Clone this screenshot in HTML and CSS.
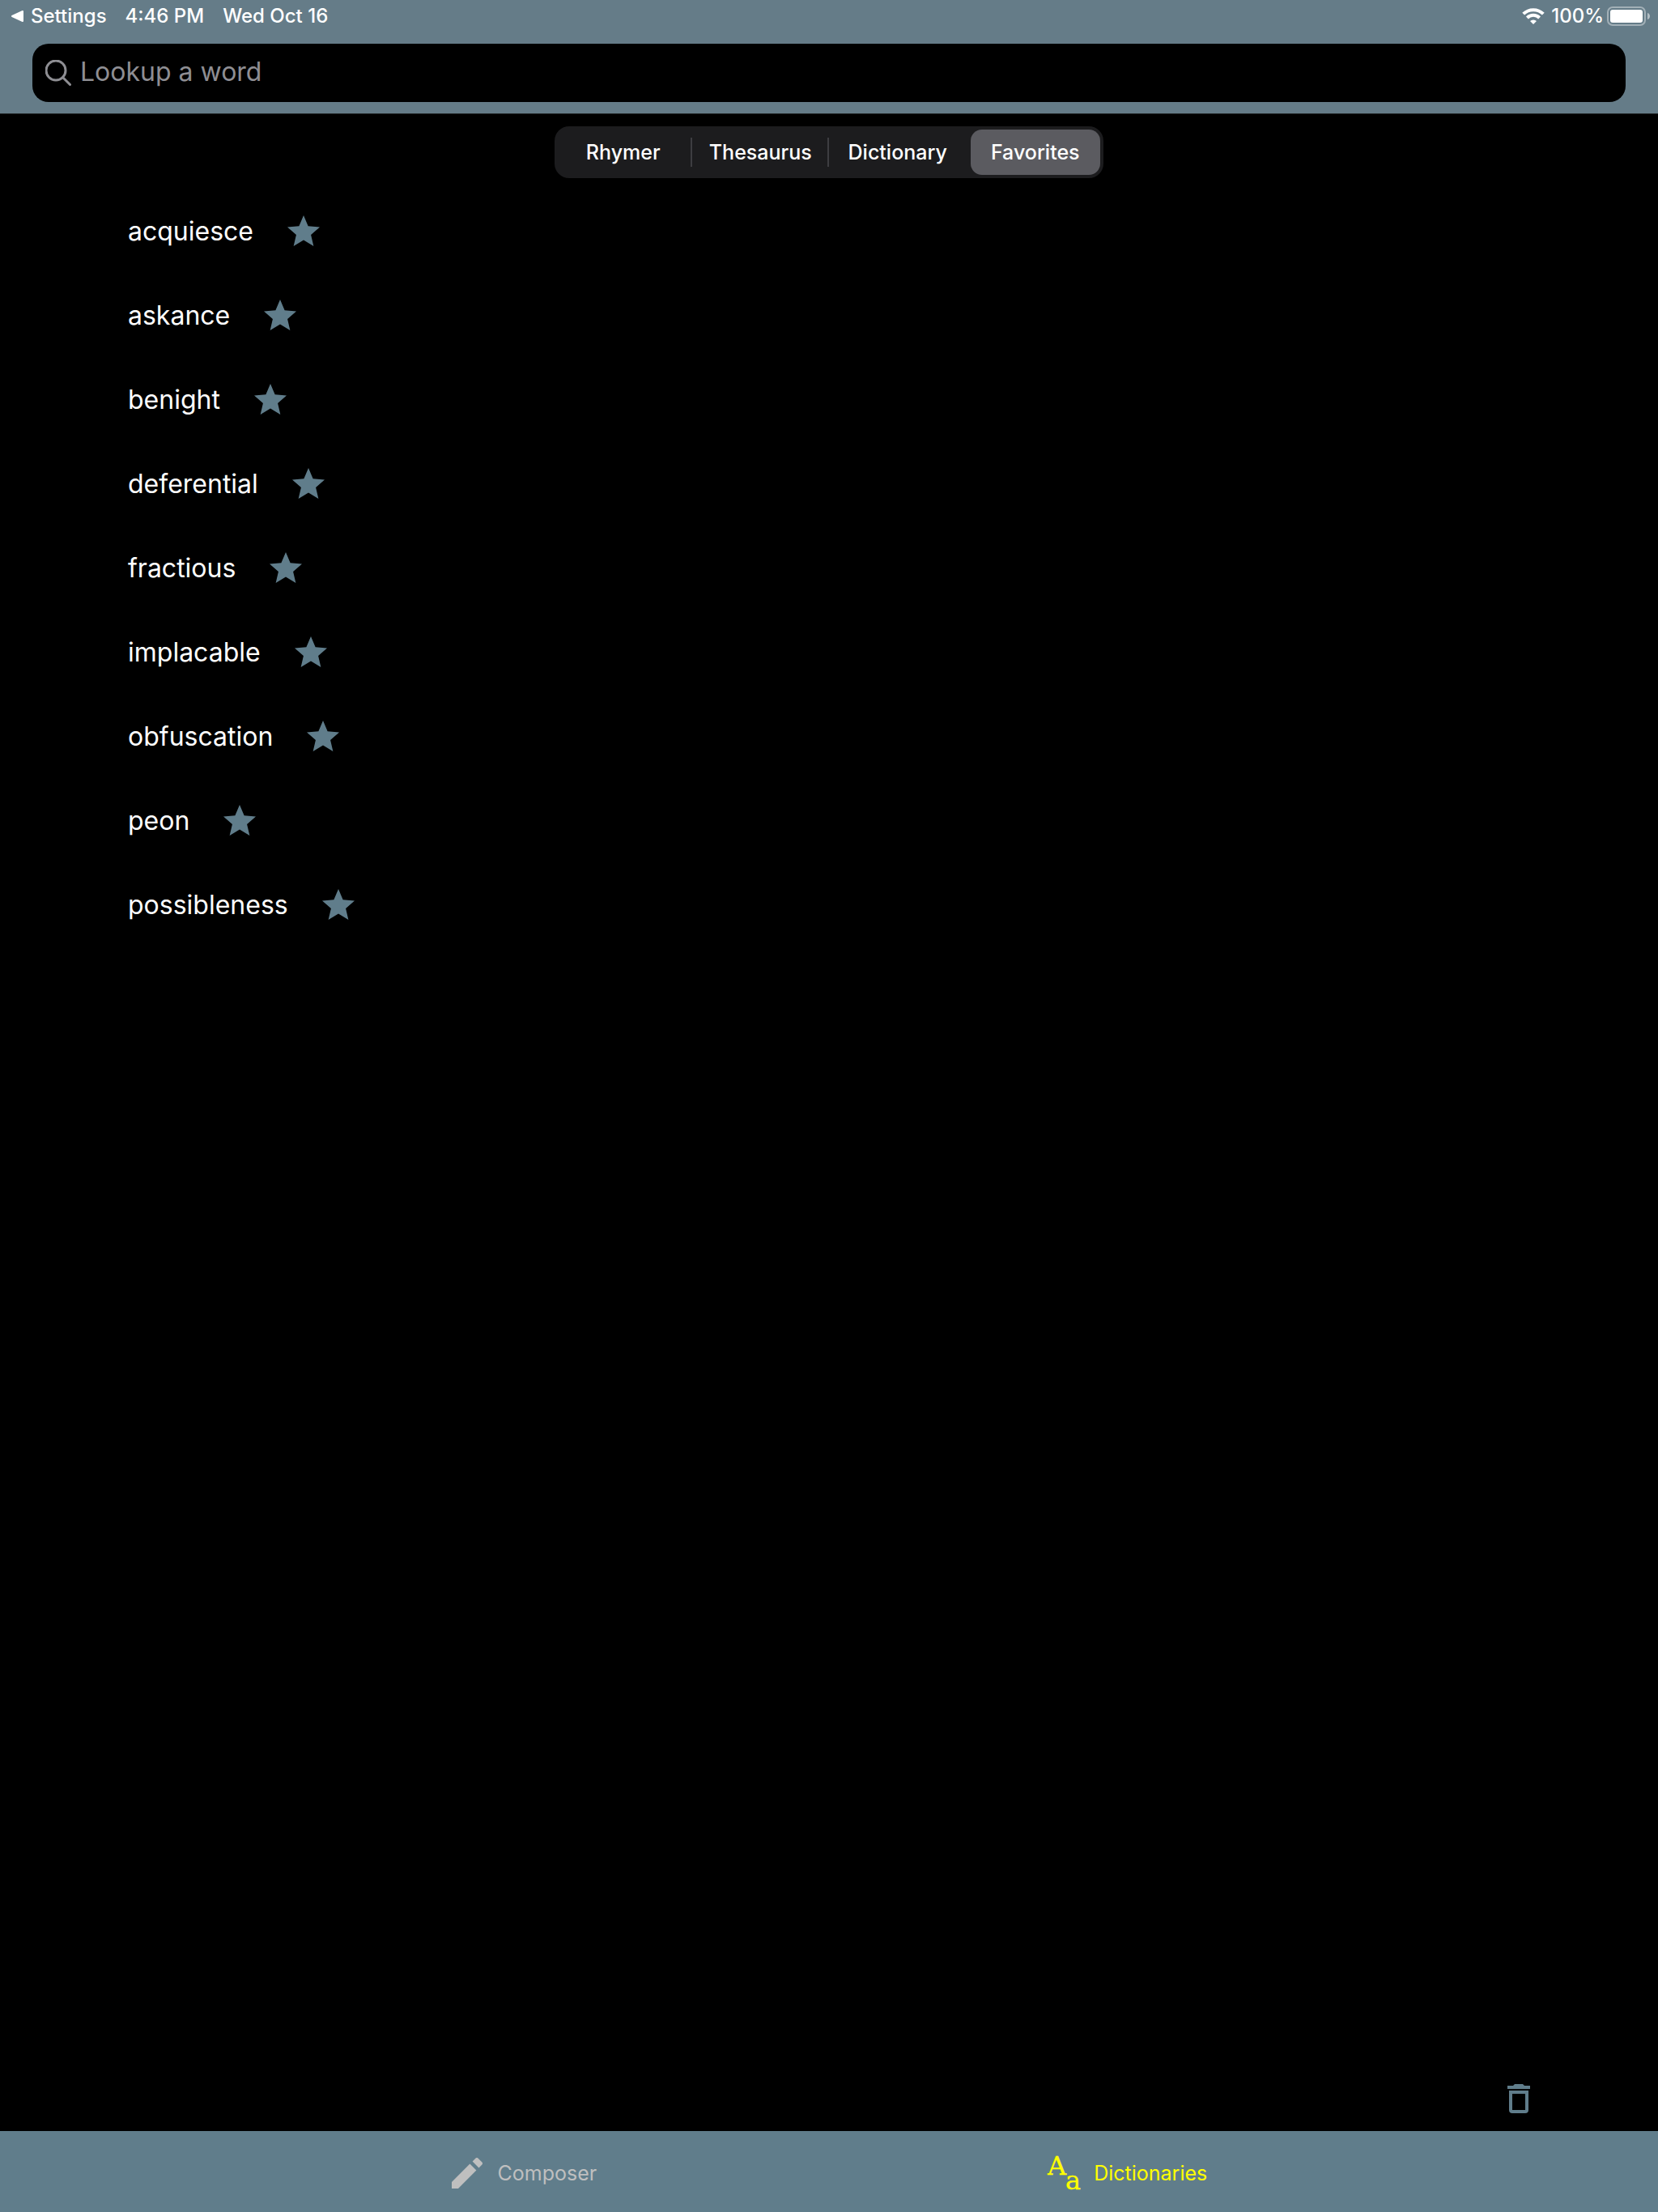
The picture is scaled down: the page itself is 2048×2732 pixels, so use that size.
FILE: index.html
```html
<!DOCTYPE html>
<html lang="en">
<head>
<meta charset="utf-8">
<meta name="viewport" content="width=device-width, initial-scale=1">
<title>Favorites</title>
<link rel="stylesheet" href="styles.css">
</head>
<body>
<svg class="sprite" aria-hidden="true">
  <symbol id="star" viewBox="0 0 24 24"><path d="M12 17.27 18.18 21l-1.64-7.03L22 9.24l-7.19-.61L12 2 9.19 8.63 2 9.24l5.46 4.73L5.82 21z"/></symbol>
</svg>
<header class="header">
  <div class="status">
    <a class="back" href="#"><svg class="back-icon" viewBox="0 0 18 18" aria-hidden="true"><path d="M3 9 16 3v12z"/></svg>Settings</a>
    <span>4:46 PM</span>
    <span>Wed Oct 16</span>
    <div class="power">
      <svg class="wifi" viewBox="0 0 28 20" aria-hidden="true">
        <path class="wifi-arc" d="M1.7 7.2a17.5 17.5 0 0 1 24.6 0M6.4 12a10.8 10.8 0 0 1 15.2 0"/>
        <path d="M14 20l-4-4a5.8 5.8 0 0 1 8 0z"/>
      </svg>
      <span>100%</span>
      <svg class="battery" viewBox="0 0 54 24" aria-hidden="true">
        <rect class="battery-case" x="1" y="1" width="46" height="22" rx="6"/>
        <rect x="4" y="4" width="40" height="16" rx="3"/>
        <path class="battery-tip" d="M50 8c4 1 4 7 0 8z"/>
      </svg>
    </div>
  </div>
  <label class="search">
    <svg class="search-icon" viewBox="0 0 32 32" aria-hidden="true"><circle cx="13" cy="13" r="12"/><path d="m21.5 21.5 9 9"/></svg>
    <input class="search-input" type="search" placeholder="Lookup a word" aria-label="Lookup a word">
  </label>
</header>
<main class="main">
  <div class="segments">
    <button class="segment" type="button">Rhymer</button>
    <button class="segment" type="button">Thesaurus</button>
    <button class="segment" type="button">Dictionary</button>
    <button class="segment segment-on" type="button" aria-pressed="true">Favorites</button>
  </div>
  <ul class="words">
    <li class="word"><span>acquiesce</span><button class="star" type="button" aria-label="Unfavorite acquiesce"><svg><use href="#star"/></svg></button></li>
    <li class="word"><span>askance</span><button class="star" type="button" aria-label="Unfavorite askance"><svg><use href="#star"/></svg></button></li>
    <li class="word"><span>benight</span><button class="star" type="button" aria-label="Unfavorite benight"><svg><use href="#star"/></svg></button></li>
    <li class="word"><span>deferential</span><button class="star" type="button" aria-label="Unfavorite deferential"><svg><use href="#star"/></svg></button></li>
    <li class="word"><span>fractious</span><button class="star" type="button" aria-label="Unfavorite fractious"><svg><use href="#star"/></svg></button></li>
    <li class="word"><span>implacable</span><button class="star" type="button" aria-label="Unfavorite implacable"><svg><use href="#star"/></svg></button></li>
    <li class="word"><span>obfuscation</span><button class="star" type="button" aria-label="Unfavorite obfuscation"><svg><use href="#star"/></svg></button></li>
    <li class="word"><span>peon</span><button class="star" type="button" aria-label="Unfavorite peon"><svg><use href="#star"/></svg></button></li>
    <li class="word"><span>possibleness</span><button class="star" type="button" aria-label="Unfavorite possibleness"><svg><use href="#star"/></svg></button></li>
  </ul>
  <button class="trash" type="button" aria-label="Delete all">
    <svg viewBox="0 0 28 36" aria-hidden="true"><path d="M0 2h7l2-2h10l2 2h7v4H0z"/><path fill-rule="evenodd" d="M2 8h24v24a4 4 0 0 1-4 4H6a4 4 0 0 1-4-4zM6 12v20h16V12z"/></svg>
  </button>
</main>
<nav class="tabs">
  <a class="tab" href="#">
    <svg class="pencil" viewBox="0 0 38 38" aria-hidden="true"><path d="M0 30v8h8l22.4-22.4-8-8zM37.4 8.4a2 2 0 0 0 0-2.8l-5-5a2 2 0 0 0-2.8 0L25.6 4.6l7.9 7.9z"/></svg>
    Composer
  </a>
  <a class="tab tab-on" href="#">
    <svg class="letters" viewBox="0 0 42 60" aria-hidden="true"><text x="1" y="32">A</text><text x="23" y="50">a</text></svg>
    Dictionaries
  </a>
</nav>
</body>
</html>
```
FILE: styles.css
```css
* { box-sizing: border-box; }

body {
  margin: 0;
  min-height: 100vh;
  display: flex;
  flex-direction: column;
  background: #000;
  color: #fff;
  font-family: Inter, "Liberation Sans", sans-serif;
}

button {
  border: 0;
  padding: 0;
  background: none;
  color: inherit;
  font: inherit;
}

a { color: inherit; text-decoration: none; }
svg { display: block; fill: currentColor; }
.sprite { display: none; }

.header {
  background: #657c88;
  border-bottom: 1px solid #222628;
  padding-bottom: 14px;
}

.status {
  display: flex;
  align-items: center;
  gap: 23px;
  height: 40px;
  margin-bottom: 14px;
  padding: 0 9px 0 12px;
  font-size: 24px;
  font-weight: 500;
  line-height: 40px;
}

.back { display: flex; align-items: center; gap: 8px; }
.back-icon {
  width: 18px;
  height: 18px;
  stroke: currentColor;
  stroke-width: 2;
  stroke-linejoin: round;
}
.power { display: flex; align-items: center; gap: 4px; margin-left: auto; }
.wifi { width: 28px; height: 20px; margin-right: 4px; }
.wifi-arc { fill: none; stroke: currentColor; stroke-width: 4; }
.battery { width: 54px; height: 24px; }
.battery-case { fill: none; stroke: #fff; stroke-width: 2; opacity: .4; }
.battery-tip { opacity: .5; }

.search {
  display: flex;
  align-items: center;
  gap: 11px;
  height: 72px;
  margin: 0 40px;
  padding: 0 16px;
  border-radius: 20px;
  background: #000;
}

.search-icon {
  width: 32px;
  height: 32px;
  fill: none;
  stroke: #8e8e93;
  stroke-width: 3;
  stroke-linecap: round;
}

.search-input {
  flex: 1;
  min-width: 0;
  border: 0;
  padding: 0 0 2px;
  outline: 0;
  background: none;
  color: #fff;
  font: 32px/40px Inter, "Liberation Sans", sans-serif;
}
.search-input::placeholder { color: #8e8e93; opacity: 1; }

.main { flex: 1; display: flex; flex-direction: column; }

.segments {
  display: grid;
  grid-template-columns: repeat(4, 1fr);
  align-self: center;
  width: 678px;
  height: 64px;
  margin: 15px 0 14px;
  border-radius: 18px;
  background: #1c1c1e;
}

.segment {
  display: flex;
  align-items: center;
  justify-content: center;
  font-size: 25px;
  font-weight: 500;
}
.segment:nth-child(-n+2) {
  background: linear-gradient(#3d3d41, #3d3d41) right center / 2px 36px no-repeat;
}
.segment-on { margin: 4px 4px 4px 5px; border-radius: 14px; background: #5b5b60; }

.words { list-style: none; margin: 0; padding: 0 158px; }
.word { display: flex; align-items: center; gap: 38px; height: 104px; font-size: 32px; line-height: 40px; }
.star, .trash { color: #607d8b; }
.star svg { width: 48px; height: 48px; }

.trash { align-self: flex-end; margin: auto 158px 22px; }
.trash svg { width: 28px; height: 36px; }

.tabs {
  display: flex;
  justify-content: center;
  gap: 10px;
  height: 100px;
  padding-right: 8px;
  background: #607d8b;
  color: #bfbfbf;
  font-size: 25px;
}
.tab { display: flex; align-items: center; justify-content: center; width: 36%; padding-top: 4px; }
.tab-on { color: #ff0; }
.pencil { width: 38px; height: 38px; margin-right: 18px; }
.letters {
  width: 42px;
  height: 60px;
  margin-right: 16px;
  overflow: visible;
  stroke: currentColor;
  stroke-width: .3;
  font-family: "DejaVu Serif", serif;
  font-size: 32px;
}
```
